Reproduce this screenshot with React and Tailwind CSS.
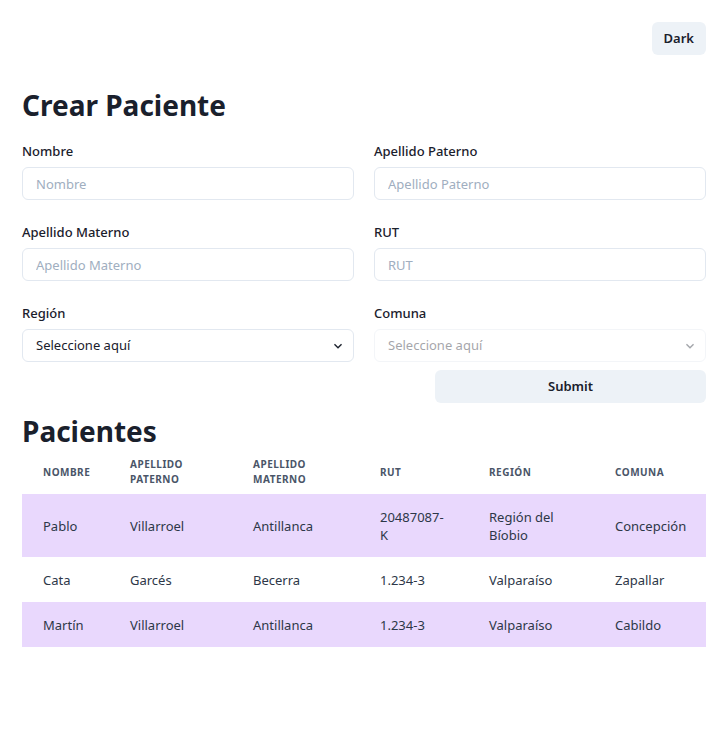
import { useState } from 'react'

const patients = [
    { nombre: 'Pablo', paterno: 'Villarroel', materno: 'Antillanca', rut: '20487087-K', region: 'Región del Bíobio', comuna: 'Concepción' },
    { nombre: 'Cata', paterno: 'Garcés', materno: 'Becerra', rut: '1.234-3', region: 'Valparaíso', comuna: 'Zapallar' },
    { nombre: 'Martín', paterno: 'Villarroel', materno: 'Antillanca', rut: '1.234-3', region: 'Valparaíso', comuna: 'Cabildo' },
]

function Chevron({ className }) {
    return (
        <svg viewBox="0 0 24 24" className={className} fill="currentColor">
            <path d="M16.59 8.59L12 13.17 7.41 8.59 6 10l6 6 6-6z" />
        </svg>
    )
}

function Field({ label, placeholder }) {
    return (
        <div>
            <label className="block text-[13px] font-medium leading-5 mb-[6px] text-[#1a202c]">{label}</label>
            <input placeholder={placeholder}
                className="w-full h-[33px] px-[13px] text-[13px] rounded-md border border-[#e2e8f0] bg-white outline-none placeholder:text-[#a0aec0]" />
        </div>
    )
}

function SelectField({ label, disabled }) {
    return (
        <div>
            <label className="block text-[13px] font-medium leading-5 mb-[6px] text-[#1a202c]">{label}</label>
            <div className={`relative ${disabled ? 'opacity-40' : ''}`}>
                <select disabled={disabled}
                    className="w-full h-[33px] pl-[13px] pr-8 text-[13px] rounded-md border border-[#e2e8f0] bg-white text-[#1a202c] appearance-none outline-none">
                    <option>Seleccione aquí</option>
                </select>
                <Chevron className="absolute right-[8px] top-1/2 -translate-y-1/2 w-4 h-4 text-[#1a202c] pointer-events-none" />
            </div>
        </div>
    )
}

export default function App() {
    const [dark] = useState(false)

    return (
        <div className="min-h-screen bg-white font-['Noto_Sans',sans-serif] text-[#1a202c] px-[22px] pt-[22px]">
            {/* Header */}
            <div className="flex justify-end">
                <button className="h-[33px] px-3 rounded-md bg-[#edf2f7] text-[13px] font-semibold text-[#1a202c]">
                    {dark ? 'Light' : 'Dark'}
                </button>
            </div>

            {/* Form */}
            <h1 className="mt-[32px] text-[28px] leading-[36px] font-bold mb-[18px]">Crear Paciente</h1>
            <div className="grid grid-cols-2 gap-x-5 gap-y-[22px]">
                <Field label="Nombre" placeholder="Nombre" />
                <Field label="Apellido Paterno" placeholder="Apellido Paterno" />
                <Field label="Apellido Materno" placeholder="Apellido Materno" />
                <Field label="RUT" placeholder="RUT" />
                <SelectField label="Región" />
                <SelectField label="Comuna" disabled />
            </div>
            <div className="flex justify-end mt-[8px]">
                <button className="w-[271px] h-[33px] rounded-md bg-[#edf2f7] text-[13px] font-semibold text-[#1a202c]">Submit</button>
            </div>

            {/* Table */}
            <h2 className="mt-[10px] text-[28px] leading-[36px] font-bold">Pacientes</h2>
            <table className="w-full table-fixed border-collapse mt-[1px]">
                <thead>
                    <tr className="text-left text-[10px] font-bold uppercase tracking-wider text-[#4a5568]">
                        <th className="w-[87px] pl-[21px] pr-2 py-[7px] leading-[15px]">Nombre</th>
                        <th className="w-[123px] pl-[21px] pr-2 py-[7px] leading-[15px]">Apellido Paterno</th>
                        <th className="w-[127px] pl-[21px] pr-2 py-[7px] leading-[15px]">Apellido Materno</th>
                        <th className="w-[109px] pl-[21px] pr-2 py-[7px] leading-[15px]">RUT</th>
                        <th className="w-[126px] pl-[21px] pr-2 py-[7px] leading-[15px]">Región</th>
                        <th className="w-[112px] pl-[21px] pr-2 py-[7px] leading-[15px]">Comuna</th>
                    </tr>
                </thead>
                <tbody>
                    {patients.map((p, i) => (
                        <tr key={i} className={`text-[13px] text-[#2d3748] ${i % 2 === 0 ? 'bg-[#e9d8fd]' : 'bg-white'}`}>
                            <td className="pl-[21px] pr-[21px] py-[13.5px] leading-[18px]">{p.nombre}</td>
                            <td className="pl-[21px] pr-[21px] py-[13.5px] leading-[18px]">{p.paterno}</td>
                            <td className="pl-[21px] pr-[21px] py-[13.5px] leading-[18px]">{p.materno}</td>
                            <td className="pl-[21px] pr-[21px] py-[13.5px] leading-[18px] break-words">{p.rut}</td>
                            <td className="pl-[21px] pr-[21px] py-[13.5px] leading-[18px]">{p.region}</td>
                            <td className="pl-[21px] pr-[21px] py-[13.5px] leading-[18px]">{p.comuna}</td>
                        </tr>
                    ))}
                </tbody>
            </table>
        </div>
    )
}
